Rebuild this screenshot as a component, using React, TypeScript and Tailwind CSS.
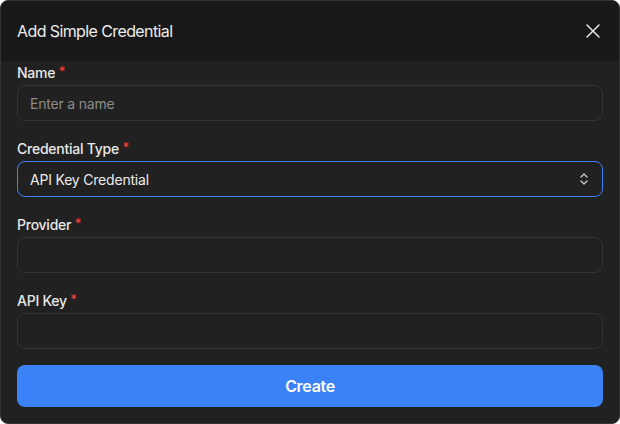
import React from "react";

function Label({ text }: { text: string }) {
  return (
    <div className="h-5 pt-[4px] leading-[16px] text-[14px] font-medium text-[#e8e8e8] tracking-[-0.25px]">
      {text} <span className="text-[#ef4444] text-[13px] relative -top-[2px]">*</span>
    </div>
  );
}

export default function App() {
  return (
    <div
      className="w-[620px] h-[424px] bg-[#212121] border border-[#343434] rounded-[8px] overflow-hidden flex flex-col"
      style={{ fontFamily: "Inter, 'Noto Sans', sans-serif" }}
    >
      <div className="h-[60px] bg-[#181818] flex items-center justify-between pl-[16px] pr-[14px] shrink-0">
        <div className="text-[16px] text-[#ececec] tracking-[-0.6px]">Add Simple Credential</div>
        <svg width="24" height="24" viewBox="0 0 24 24" fill="none" stroke="#e5e5e5" strokeWidth="1.5" strokeLinecap="round">
          <path d="M18 6 6 18M6 6l12 12" />
        </svg>
      </div>
      <div className="flex flex-col px-[16px]">
        <Label text="Name" />
        <div className="mt-1 h-9 rounded-[8px] border border-[#343434] flex items-center px-3 text-[14px] text-[#8c8c8c] tracking-[-0.2px]">
          Enter a name
        </div>
        <div className="mt-4">
          <Label text="Credential Type" />
        </div>
        <div className="mt-1 h-9 rounded-[8px] border border-[#3b82f6] flex items-center justify-between px-3 text-[14px] text-[#ececec] tracking-[-0.2px]">
          <span>API Key Credential</span>
          <svg width="12" height="14" viewBox="0 0 12 14" fill="none" stroke="#cfcfcf" strokeWidth="1.3" strokeLinecap="round" strokeLinejoin="round">
            <path d="M3 5 6 2l3 3M3 9l3 3 3-3" />
          </svg>
        </div>
        <div className="mt-4">
          <Label text="Provider" />
        </div>
        <div className="mt-1 h-9 rounded-[8px] border border-[#343434]" />
        <div className="mt-4">
          <Label text="API Key" />
        </div>
        <div className="mt-1 h-9 rounded-[8px] border border-[#343434]" />
        <button className="mt-4 h-[42px] rounded-[8px] bg-[#3b82f6] text-white text-[16px] font-semibold tracking-[-0.3px]">
          Create
        </button>
      </div>
    </div>
  );
}
